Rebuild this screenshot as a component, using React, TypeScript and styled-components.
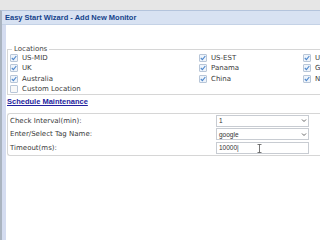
import React from 'react';
import styled, { createGlobalStyle } from 'styled-components';

const GlobalStyle = createGlobalStyle`
  html, body {
    margin: 0;
    padding: 0;
    background: #e6e6e6;
    overflow: hidden;
  }
  body {
    width: 320px;
    height: 240px;
    font-family: "DejaVu Sans", Verdana, sans-serif;
  }
`;

const Page = styled.div`
  width: 320px;
  height: 240px;
  padding-top: 10px;
  box-sizing: border-box;
  display: flex;
  flex-direction: column;
`;

const Window = styled.div`
  flex: 1;
  display: flex;
  flex-direction: column;
  border-left: 2px solid #aab4c0;
  border-top: 1px solid #b4c4dc;
`;

const TitleBar = styled.div`
  height: 13px;
  display: flex;
  align-items: center;
  padding-left: 3px;
  background: #d8e2f2;
  border-bottom: 1px solid #c4d2e6;
  color: #15428b;
  font-family: "Liberation Sans", Arial, sans-serif;
  font-size: 7.5px;
  font-weight: 700;
  white-space: nowrap;
`;

const Body = styled.div`
  flex: 1;
  display: flex;
  flex-direction: column;
  background: #ffffff;
  border-left: 4px solid #d4dcf0;
  padding: 20px 0 0 1px;
  font-size: 7px;
  color: #3a3a3a;
`;

const Fieldset = styled.fieldset<{ $round?: boolean }>`
  margin: 0;
  padding: 0 0 0 2px;
  border: 1px solid #d6d6d6;
  border-right: none;
  border-radius: ${p => (p.$round ? '3px 0 0 3px' : '0')};
  min-width: 0;
`;

const Legend = styled.legend`
  padding: 0 2px;
  margin-left: 2px;
  color: #444;
  font-size: 7px;
  line-height: 8px;
`;

const LocationGrid = styled.div`
  display: grid;
  grid-template-columns: 189px 104px 1fr;
  grid-auto-rows: 10.3px;
  align-items: center;
`;

const CheckItem = styled.label`
  display: flex;
  align-items: center;
  gap: 4px;
  white-space: nowrap;
  color: #3a3a3a;
`;

const Box = styled.span<{ $on?: boolean }>`
  width: 6px;
  height: 6px;
  flex-shrink: 0;
  border: 1px solid #b8c6d8;
  border-radius: 1px;
  background: ${p => (p.$on ? '#eef4fb' : '#f8f8f8')};
  display: flex;
  align-items: center;
  justify-content: center;
`;

const Link = styled.a`
  display: block;
  margin: 3px 0 7px 0;
  color: #22229e;
  font-family: "Liberation Sans", Arial, sans-serif;
  font-weight: 700;
  font-size: 7.5px;
  text-decoration: underline;
  line-height: 8px;
`;

const FormRow = styled.div`
  display: grid;
  grid-template-columns: 206px 93px;
  align-items: center;
  height: 13.5px;
  color: #3a3a3a;
`;

const Field = styled.div`
  position: relative;
  height: 12px;
  border: 1px solid #c8ccd2;
  box-sizing: border-box;
  display: flex;
  align-items: center;
  padding-left: 2px;
  font-family: "Liberation Sans", Arial, sans-serif;
  font-size: 6.5px;
  color: #333;
  background: #fff;
`;

const Arrow = styled.span`
  margin-left: auto;
  width: 9px;
  height: 100%;
  display: flex;
  align-items: center;
  justify-content: center;
`;

const Caret = styled.span`
  position: absolute;
  left: 40px;
  top: 1px;
`;

const Check = ({ on }: { on: boolean }) => (
  <Box $on={on}>
    {on && (
      <svg width="6" height="6" viewBox="0 0 6 6">
        <path d="M0.8 3 L2.4 4.6 L5.3 1" fill="none" stroke="#4f88cc" strokeWidth="1.1" />
      </svg>
    )}
  </Box>
);

const locations: [string, boolean][] = [
  ['US-MID', true], ['US-EST', true], ['US-WST', true],
  ['UK', true], ['Panama', true], ['Germany', true],
  ['Australia', true], ['China', true], ['Netherlands', true],
  ['Custom Location', false],
];

const DownArrow = () => (
  <svg width="6" height="5" viewBox="0 0 6 5">
    <path d="M1 1.5 L3 3.5 L5 1.5" fill="none" stroke="#666" strokeWidth="1" />
  </svg>
);

const App: React.FC = () => (
  <>
    <GlobalStyle />
    <Page>
      <Window>
        <TitleBar>Easy Start Wizard - Add New Monitor</TitleBar>
        <Body>
          <Fieldset>
            <Legend>Locations</Legend>
            <LocationGrid>
              {locations.map(([name, on]) => (
                <CheckItem key={name}>
                  <Check on={on} />
                  {name}
                </CheckItem>
              ))}
            </LocationGrid>
          </Fieldset>
          <Link>Schedule Maintenance</Link>
          <Fieldset $round>
            <FormRow>
              <span>Check Interval(min):</span>
              <Field>1<Arrow><DownArrow /></Arrow></Field>
            </FormRow>
            <FormRow>
              <span>Enter/Select Tag Name:</span>
              <Field>google<Arrow><DownArrow /></Arrow></Field>
            </FormRow>
            <FormRow>
              <span>Timeout(ms):</span>
              <Field>
                10000|
                <Caret>
                  <svg width="5" height="9" viewBox="0 0 5 9">
                    <path d="M0.5 0.5 H4.5 M2.5 0.5 V8.5 M0.5 8.5 H4.5" stroke="#555" strokeWidth="0.8" fill="none" />
                  </svg>
                </Caret>
              </Field>
            </FormRow>
          </Fieldset>
        </Body>
      </Window>
    </Page>
  </>
);

export default App;
